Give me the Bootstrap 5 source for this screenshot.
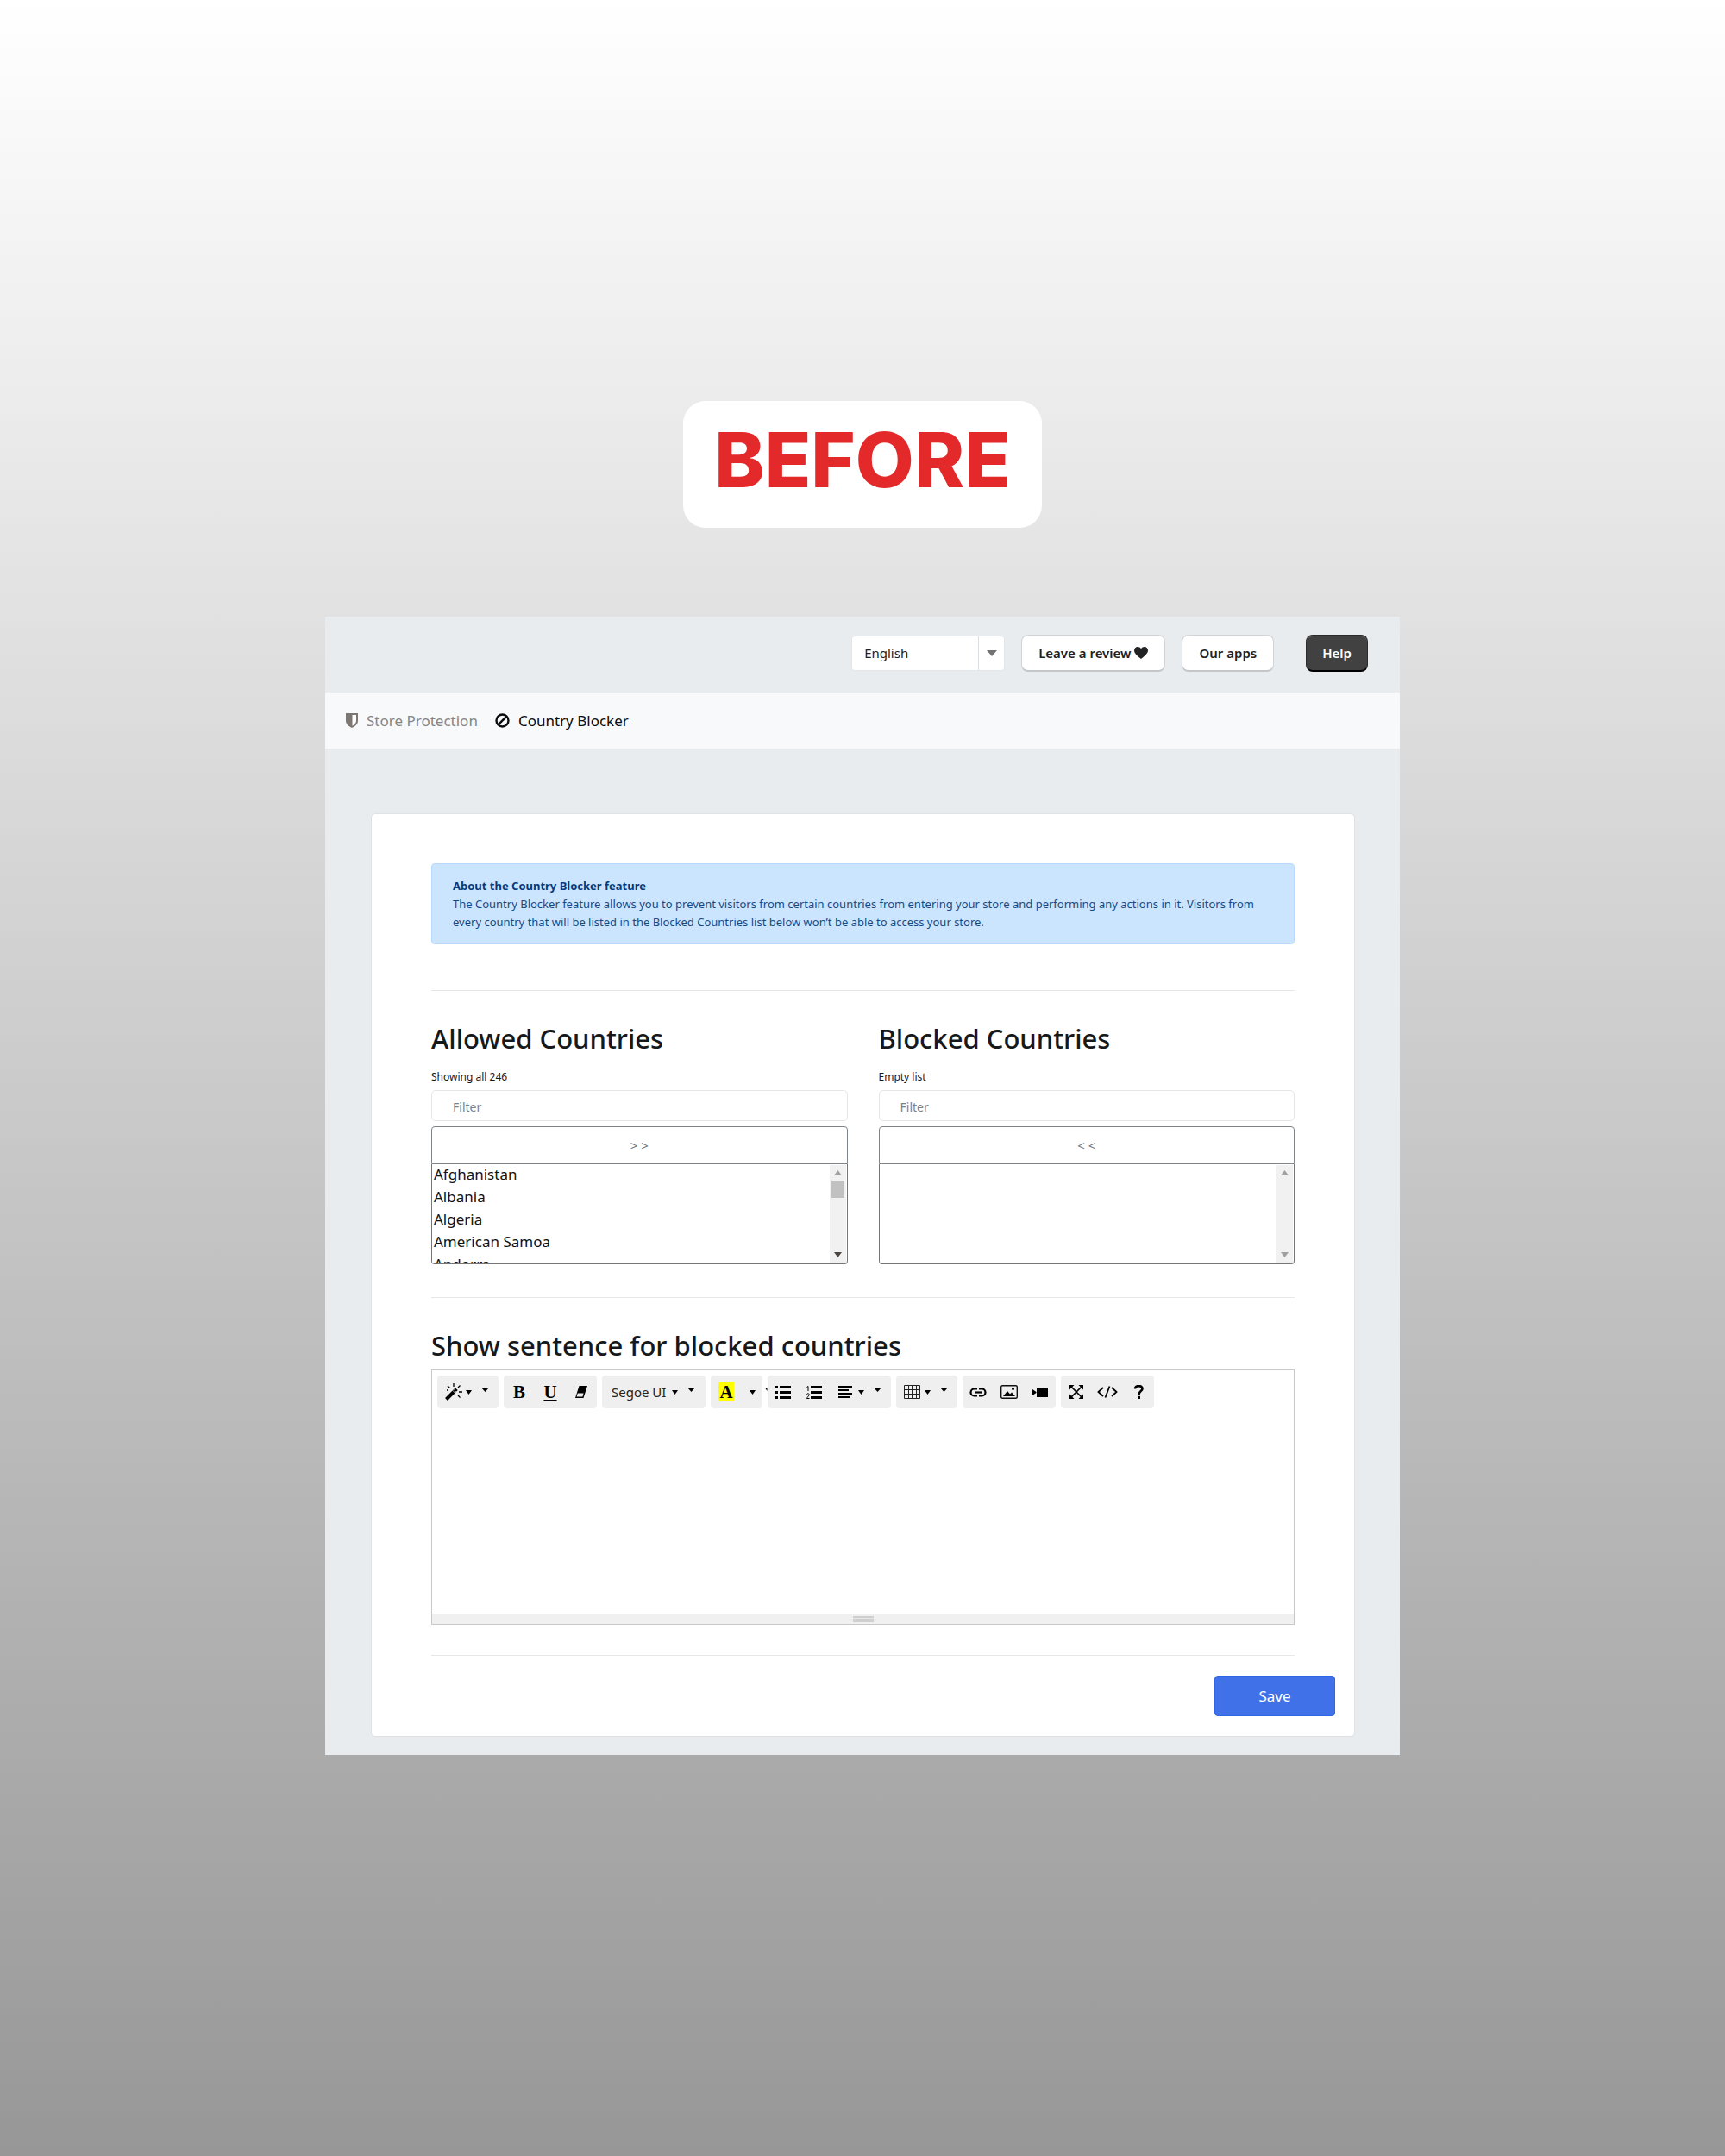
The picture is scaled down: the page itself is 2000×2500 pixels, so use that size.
<!DOCTYPE html>
<html lang="en">
<head>
<meta charset="utf-8">
<meta name="viewport" content="width=device-width, initial-scale=1">
<title>Country Blocker</title>
<link href="https://cdn.jsdelivr.net/npm/bootstrap@5.3.0/dist/css/bootstrap.min.css" rel="stylesheet">
<style>
  html { min-height: 100%; }
  body { font-family: "Noto Sans", "Open Sans", sans-serif; color: #16191c; background: linear-gradient(#fff, #979797); min-height: 100vh; padding: 465px 16px 64px; }
  .stage-label { font-family: Inter, sans-serif; font-weight: 800; font-size: 88px; line-height: 107px; color: #e32929; background: #fff; border-radius: 26px; padding: 15px 36px 25px; margin-bottom: 103px; }
  .app-panel { max-width: 1246px; background: #e8ecef; }
  .top-bar { min-height: 88px; padding: 0 37px 3px; gap: 19px; font-size: 15px; }
  .lang-box { width: 178px; height: 41px; background: #fff; border: 1px solid #e3e6e8; border-radius: 4px; overflow: hidden; }
  .lang-box select { appearance: none; border: 0; background: transparent; padding: 0 14px; color: #222; font-size: 15px; flex: 1; min-width: 0; }
  .lang-box span { width: 30px; border-left: 1px solid #dcdfe1; }
  .pill-btn { height: 43px; background: #fff; border: 1px solid #d0d4d7; border-bottom: 2px solid #c3c7ca; border-radius: 8px; font-size: 15px; font-weight: 600; color: #202223; padding: 0 19px; line-height: 40px; }
  .pill-dark { background: #414141; border-color: #2b2b2b; border-bottom-color: #000; color: #fff; box-shadow: inset 0 1px 0 #6a6a6a; padding: 0 18px; margin-left: 18px; }
  .pill-dark:hover { background: #333; color: #fff; }
  .tab-bar { min-height: 65px; background: #f8f9fb; padding: 0 24px; gap: 20px; font-size: 17px; }
  .tab-bar a { color: #858585; text-decoration: none; gap: 10px; }
  .tab-bar a.current { color: #0c0c0c; }
  .main-card { margin: 75px 52px 21px 53px; border: 1px solid #dfe1e3; border-radius: 5px; padding: 57px 21px 23px; }
  .card-inner { padding: 0 48px; }
  .info-note { background: #cce5ff; border: 1px solid #b8daff; border-radius: 4px; color: #164a86; font-size: 13px; line-height: 21px; padding: 15px 24px 14px; margin-bottom: 53px; }
  .info-note strong { color: #053a7c; }
  .rule { height: 1px; background: #e6e7e8; border: 0; opacity: 1; margin: 0; }
  h2 { font-size: 31px; line-height: 38px; font-weight: 500; margin: 0; }
  .lists { padding: 36px 0 38px; }
  .lists .row { --bs-gutter-x: 36px; }
  .count-line { font-size: 12px; line-height: 18px; margin: 17px 0 6px; }
  .filter-box { height: 36px; border: 1px solid #e4e6e8; border-radius: 5px; font-size: 14px; padding: 2px 24px 0; color: #6c757d; }
  .filter-box::placeholder { color: #7a828a; opacity: 1; }
  .move-btn { height: 44px; margin-top: 6px; border: 1px solid #7d848a; border-radius: 4px 4px 0 0; color: #6c757d; font-size: 15px; padding: 0; background: #fff; }
  .list-frame { height: 116px; border: 1px solid #767676; border-top: 0; border-radius: 0 0 4px 4px; overflow: hidden; }
  .list-frame select { flex: 1; border: 0; padding: 0; font-size: 17px; color: #111; background: #fff; overflow: hidden; outline: 0; scrollbar-width: none; }
  .list-frame option { height: 26px; line-height: 26px; min-height: 26px; padding: 0 2px; }
  .bar-track { width: 19px; margin: 1px 1px 1px 0; background: #f1f1f1; padding: 6px 0; }
  .bar-thumb { width: 15px; height: 20px; background: #c1c1c1; margin: 6px 0 auto; }
  .sentence-title { margin-top: 36px; }
  .editor { border: 1px solid #c8c9ca; margin: 9px 0 35px; }
  .tools { padding: 6px 6px 0; gap: 6px; }
  .tool-set { background: #efefef; border-radius: 4px; height: 38px; }
  .tool-set .btn { width: 36px; height: 38px; padding: 0; border: 0; border-radius: 4px; color: #000; }
  .tool-set .btn-menu { width: 71px; padding-left: 9px; }
  .tool-set .btn-font { width: 120px; padding-left: 11px; font-size: 15px; color: #222; }
  .tool-set .btn-pick { width: 24px; }
  .caret-s { margin-left: 4px; }
  .btn-font .caret-s { margin-left: 7px; }
  .caret-l { margin-left: 11px; margin-bottom: 5px; }
  .serif-mark { font-family: "Liberation Serif", serif; font-weight: 700; font-size: 21px; line-height: 22px; }
  .hilite { background: #ff0; padding: 0 1px; }
  .clip-tip { width: 6px; margin: 0 -6px; }
  .editor textarea { border: 0; height: 238px; resize: none; width: 100%; display: block; outline: 0; }
  .grip-bar { height: 12px; background: #f0f0f0; border-top: 1px solid #c8c9ca; }
  .grip-bar i { width: 24px; height: 7px; background: linear-gradient(#cfcfcf 2px, #e6e6e6 2px, #e6e6e6 3px, #cfcfcf 3px, #cfcfcf 4px, #e6e6e6 4px, #e6e6e6 5px, #cfcfcf 5px); }
  .save-btn { width: 140px; height: 47px; background: #4071e8; border: 1px solid #2f66e6; border-radius: 4px; color: #fff; font-size: 17px; margin: 23px 1px 0 0; }
  svg { display: block; flex: none; }
</style>
</head>
<body class="d-flex flex-column align-items-center">
<svg width="0" height="0" class="position-absolute" aria-hidden="true">
  <symbol id="dn-s" viewBox="0 0 7 5"><path d="M0 0h7L3.500 5z"/></symbol>
  <symbol id="dn-l" viewBox="0 0 9 5"><path d="M0 0h9L4.500 5z"/></symbol>
</svg>

<h1 class="stage-label">BEFORE</h1>

<main class="app-panel w-100">
  <header class="top-bar d-flex align-items-center justify-content-end">
    <div class="lang-box d-flex">
      <select aria-label="Language"><option>English</option></select>
      <span class="d-flex align-items-center justify-content-center"><svg width="12" height="7" viewBox="0 0 12 7" fill="#737373"><path d="M0 0h12L6 7z"/></svg></span>
    </div>
    <button type="button" class="btn pill-btn d-flex align-items-center gap-1">Leave a review
      <svg width="16" height="14" viewBox="0 0 16 14" fill="#202223"><path d="M8 14C5 11.500 0 8 0 4.200 0 1.800 1.800 0 4 0c1.700 0 3.200.9 4 2.300C8.800.9 10.300 0 12 0c2.200 0 4 1.800 4 4.200C16 8 11 11.500 8 14z"/></svg>
    </button>
    <button type="button" class="btn pill-btn">Our apps</button>
    <button type="button" class="btn pill-btn pill-dark">Help</button>
  </header>

  <nav class="tab-bar d-flex align-items-center">
    <a href="#" class="d-flex align-items-center">
      <svg width="14" height="17" viewBox="0 0 14 17"><path d="M0 0h14v9c0 3.500-3.500 6.500-7 8-3.500-1.500-7-4.500-7-8z" fill="#7d7773"/><path d="M7.500 2H12v7c0 2.200-2 4.300-4.500 5.700z" fill="#fff"/></svg>
      Store Protection</a>
    <a href="#" class="current d-flex align-items-center">
      <svg width="17" height="17" viewBox="0 0 17 17" fill="none" stroke="#0c0c0c" stroke-width="2.400"><circle cx="8.500" cy="8.500" r="7"/><path d="M3.600 13.400l9.800-9.800"/></svg>
      Country Blocker</a>
  </nav>

  <section class="main-card bg-white">
    <div class="card-inner">
      <div class="info-note" role="note"><strong>About the Country Blocker feature</strong><br>The Country Blocker feature allows you to prevent visitors from certain countries from entering your store and performing any actions in it. Visitors from every country that will be listed in the Blocked Countries list below won’t be able to access your store.</div>
      <hr class="rule">

      <div class="lists">
        <div class="row">
          <div class="col-6">
            <h2>Allowed Countries</h2>
            <p class="count-line">Showing all 246</p>
            <input type="text" class="filter-box w-100 d-block" placeholder="Filter" aria-label="Filter allowed countries">
            <button type="button" class="btn move-btn w-100 d-block">&gt; &gt;</button>
            <div class="list-frame d-flex">
              <select multiple size="4" aria-label="Allowed countries"><option>Afghanistan</option><option>Albania</option><option>Algeria</option><option>American Samoa</option><option>Andorra</option></select>
              <div class="bar-track d-flex flex-column align-items-center" aria-hidden="true">
                <svg width="9" height="6" viewBox="0 0 9 6" fill="#a0a0a0"><path d="M0 6h9L4.500 0z"/></svg>
                <div class="bar-thumb"></div>
                <svg width="9" height="6" viewBox="0 0 9 6" fill="#4a4540"><path d="M0 0h9L4.500 6z"/></svg>
              </div>
            </div>
          </div>
          <div class="col-6">
            <h2>Blocked Countries</h2>
            <p class="count-line">Empty list</p>
            <input type="text" class="filter-box w-100 d-block" placeholder="Filter" aria-label="Filter blocked countries">
            <button type="button" class="btn move-btn w-100 d-block">&lt; &lt;</button>
            <div class="list-frame d-flex">
              <select multiple size="4" aria-label="Blocked countries"></select>
              <div class="bar-track d-flex flex-column align-items-center justify-content-between" aria-hidden="true">
                <svg width="9" height="6" viewBox="0 0 9 6" fill="#a0a0a0"><path d="M0 6h9L4.500 0z"/></svg>
                <svg width="9" height="6" viewBox="0 0 9 6" fill="#a0a0a0"><path d="M0 0h9L4.500 6z"/></svg>
              </div>
            </div>
          </div>
        </div>
      </div>

      <hr class="rule">
      <h2 class="sentence-title">Show sentence for blocked countries</h2>

      <div class="editor">
        <div class="tools d-flex">
          <div class="tool-set d-flex">
            <button type="button" class="btn btn-menu d-flex align-items-center" aria-label="Style">
              <svg width="20" height="20" viewBox="0 0 20 20" fill="none" stroke="#000"><path d="M1.500 18.500L10 10" stroke-width="4"/><path d="M10.300 9.700l3-3" stroke-width="4"/><path d="M10.200 7.300l2.500 2.500" stroke="#efefef" stroke-width=".8"/><path d="M10 0v4M3 3l2.500 2.500M17.500 2.500L15 5M16 10h4M15 14l2.500 2.500M2 8h2" stroke-width="1.300"/></svg>
              <svg class="caret-s" width="7" height="5"><use href="#dn-s"/></svg><svg class="caret-l" width="9" height="5"><use href="#dn-l"/></svg>
            </button>
          </div>
          <div class="tool-set d-flex">
            <button type="button" class="btn serif-mark" aria-label="Bold">B</button>
            <button type="button" class="btn serif-mark text-decoration-underline" aria-label="Underline">U</button>
            <button type="button" class="btn d-flex align-items-center justify-content-center" aria-label="Remove format">
              <svg width="14" height="14" viewBox="0 0 14 14"><path d="M4.500 0H14L9.500 14H0z"/><path d="M2.800 8.500h6.800l-1.200 4H1.600z" fill="#efefef"/></svg>
            </button>
          </div>
          <div class="tool-set d-flex">
            <button type="button" class="btn btn-font d-flex align-items-center">Segoe UI
              <svg class="caret-s" width="7" height="5"><use href="#dn-s"/></svg><svg class="caret-l" width="9" height="5"><use href="#dn-l"/></svg>
            </button>
          </div>
          <div class="tool-set d-flex">
            <button type="button" class="btn d-flex align-items-center justify-content-center" aria-label="Recent color"><span class="serif-mark hilite">A</span></button>
            <button type="button" class="btn btn-pick d-flex align-items-center justify-content-center" aria-label="More colors"><svg width="7" height="5"><use href="#dn-s"/></svg></button>
          </div>
          <svg class="clip-tip" height="38" viewBox="0 0 6 38"><path d="M3.500 15h2v3z"/></svg>
          <div class="tool-set d-flex">
            <button type="button" class="btn d-flex align-items-center justify-content-center" aria-label="Unordered list">
              <svg width="18" height="15" viewBox="0 0 18 15"><path d="M0 0h3v3H0zM0 6h3v3H0zM0 12h3v3H0zM5 0h13v3H5zM5 6h13v3H5zM5 12h13v3H5z"/></svg>
            </button>
            <button type="button" class="btn d-flex align-items-center justify-content-center" aria-label="Ordered list">
              <svg width="18" height="15" viewBox="0 0 18 15"><path d="M5 0h13v3H5zM5 6h13v3H5zM5 12h13v3H5z"/><path d="M.5 1.500L2 .5V6M.5 10c.5-2 3-1.500 2.700.3C3 11.500 1 13 .5 14.500h3" fill="none" stroke="#000"/></svg>
            </button>
            <button type="button" class="btn btn-menu d-flex align-items-center" aria-label="Paragraph">
              <svg width="20" height="14" viewBox="0 0 20 14"><path d="M1 0h16v2H1zM1 4h12v2H1zM1 8h16v2H1zM1 12h13v2H1z"/></svg>
              <svg class="caret-s" width="7" height="5"><use href="#dn-s"/></svg><svg class="caret-l" width="9" height="5"><use href="#dn-l"/></svg>
            </button>
          </div>
          <div class="tool-set d-flex">
            <button type="button" class="btn btn-menu d-flex align-items-center" aria-label="Table">
              <svg width="20" height="16" viewBox="0 0 20 16" fill="none" stroke="#222"><path d="M.5.5h18v15H.500zM.5 5.500h18M.5 10.500h18M5.500.5v15M9.500.5v15M14.500.5v15"/></svg>
              <svg class="caret-s" width="7" height="5"><use href="#dn-s"/></svg><svg class="caret-l" width="9" height="5"><use href="#dn-l"/></svg>
            </button>
          </div>
          <div class="tool-set d-flex">
            <button type="button" class="btn d-flex align-items-center justify-content-center" aria-label="Link">
              <svg width="20" height="11" viewBox="0 0 20 11" fill="none" stroke="#000" stroke-width="2.200"><path d="M9 1.500H5.500a4 4 0 0 0 0 8H9M11 1.500h3.500a4 4 0 0 1 0 8H11"/><path d="M6 5.500h8"/></svg>
            </button>
            <button type="button" class="btn d-flex align-items-center justify-content-center" aria-label="Picture">
              <svg width="20" height="16" viewBox="0 0 20 16"><rect x=".7" y=".7" width="18.600" height="14.600" rx="1.500" fill="none" stroke="#111" stroke-width="1.400"/><path d="M3 13l5-6 3 3.500 2-2 4 4.500z"/><circle cx="14.500" cy="4.500" r="1.500"/></svg>
            </button>
            <button type="button" class="btn d-flex align-items-center justify-content-center" aria-label="Video">
              <svg width="18" height="11" viewBox="0 0 18 11"><path d="M5 0h13v11H5zM0 2l4.500 3v1L0 9z"/></svg>
            </button>
          </div>
          <div class="tool-set d-flex">
            <button type="button" class="btn d-flex align-items-center justify-content-center" aria-label="Full screen">
              <svg width="16" height="16" viewBox="0 0 16 16"><path d="M0 0h5.500L0 5.500zM16 0v5.500L10.500 0zM0 16v-5.500L5.500 16zM16 16h-5.500l5.500-5.500z"/><path d="M2 2l12 12M14 2L2 14" stroke="#000" stroke-width="1.700"/></svg>
            </button>
            <button type="button" class="btn d-flex align-items-center justify-content-center" aria-label="Code view">
              <svg width="24" height="14" viewBox="0 0 24 14" fill="none" stroke="#000" stroke-width="1.800"><path d="M7 2L1.500 7 7 12M17 2l5.500 5L17 12M14.500.5l-5 13"/></svg>
            </button>
            <button type="button" class="btn d-flex align-items-center justify-content-center" aria-label="Help">
              <svg width="11" height="16" viewBox="0 0 11 16"><path d="M1 4.500C1.200 0 9.500 0 9.500 4.300 9.500 7.200 5.500 7 5.500 11" fill="none" stroke="#000" stroke-width="2.600"/><path d="M4 12.800h3V16H4z"/></svg>
            </button>
          </div>
        </div>
        <textarea aria-label="Sentence for blocked countries"></textarea>
        <div class="grip-bar d-flex align-items-center justify-content-center"><i></i></div>
      </div>
      <hr class="rule">
    </div>
    <div class="d-flex justify-content-end"><button type="submit" class="btn save-btn">Save</button></div>
  </section>
</main>
<script src="https://cdn.jsdelivr.net/npm/bootstrap@5.3.0/dist/js/bootstrap.bundle.min.js"></script>
</body>
</html>
